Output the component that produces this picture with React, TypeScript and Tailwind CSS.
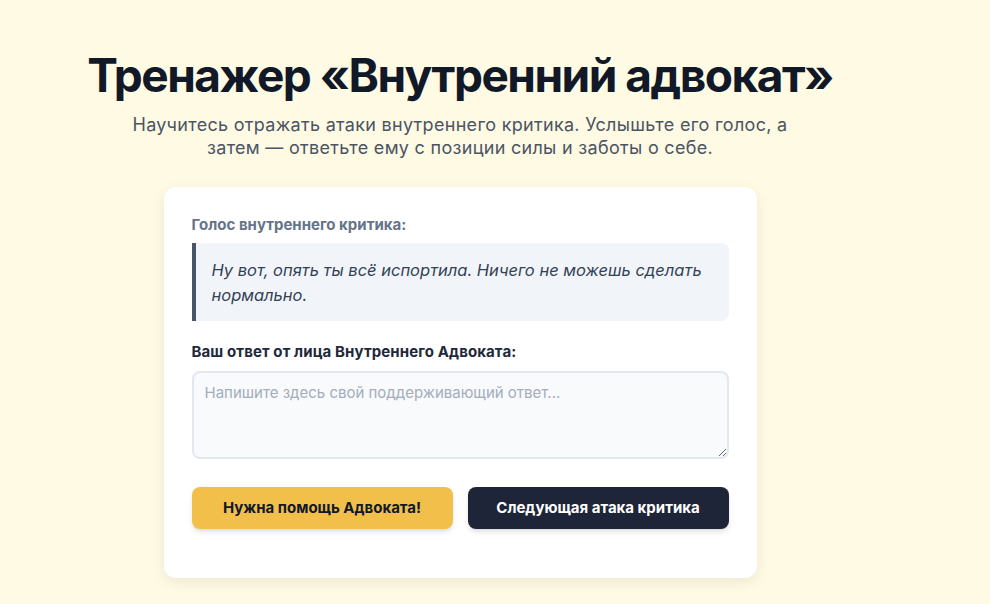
import React, { useState } from 'react';

const App: React.FC = () => {
    const [answer, setAnswer] = useState('');

    return (
        <div className="min-h-screen w-full bg-[#fefae3] font-['Inter','Noto_Sans',sans-serif]">
            <div className="w-[920px] flex flex-col items-center pt-[47px]">
                <h1 className="text-[46px] leading-[56px] font-bold text-[#111827] tracking-[-1.5px]">
                    Тренажер «Внутренний адвокат»
                </h1>
                <p className="mt-[10px] w-[690px] text-center text-[18px] leading-[23px] tracking-[0.3px] text-[#4b5563]">
                    Научитесь отражать атаки внутреннего критика. Услышьте его голос, а затем — ответьте ему с позиции силы и заботы о себе.
                </p>

                <div className="mt-[28px] w-[593px] bg-white rounded-xl shadow-[0_4px_14px_rgba(0,0,0,0.08)] px-7 pt-[28px] pb-[49px]">
                    <div className="text-[15px] leading-[20px] font-bold text-[#64748b]">Голос внутреннего критика:</div>
                    <div className="mt-[8px] bg-[#f1f5f9] border-l-4 border-[#475569] rounded-r-lg pl-4 pr-4 pt-[15px] pb-[13px]">
                        <p className="italic text-[16.5px] leading-[25px] text-[#334155]">
                            Ну вот, опять ты всё испортила. Ничего не можешь сделать нормально.
                        </p>
                    </div>

                    <label className="block mt-[21px] text-[15px] leading-[20px] font-bold tracking-[0.1px] text-[#1e293b]">
                        Ваш ответ от лица Внутреннего Адвоката:
                    </label>
                    <textarea
                        value={answer}
                        onChange={e => setAnswer(e.target.value)}
                        placeholder="Напишите здесь свой поддерживающий ответ..."
                        className="mt-[9px] block w-full h-[88px] bg-[#f8fafc] border-2 border-[#e2e8f0] rounded-lg px-[11px] py-[9px] text-[15px] text-[#334155] placeholder:text-[#a3adbb] outline-none"
                    />

                    <div className="mt-[28px] grid grid-cols-2 gap-[15px]">
                        <button className="h-[42px] rounded-lg bg-[#f2c04a] text-[#111827] text-[15px] font-bold shadow-md">
                            Нужна помощь Адвоката!
                        </button>
                        <button className="h-[42px] rounded-lg bg-[#1e2538] text-white text-[15px] font-bold shadow-md">
                            Следующая атака критика
                        </button>
                    </div>
                </div>
            </div>
        </div>
    );
};

export default App;
